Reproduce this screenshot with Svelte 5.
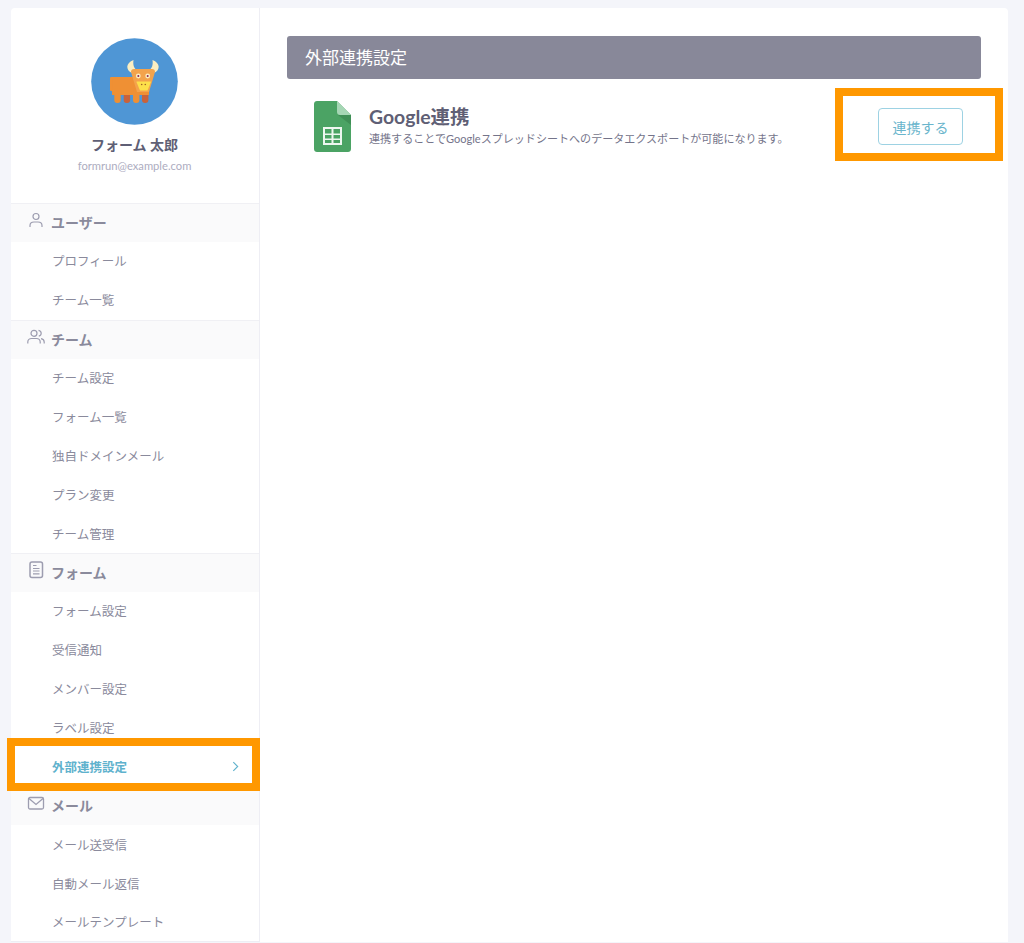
<script>
  const sections = [
    { name: 'ユーザー', icon: 'user', items: ['プロフィール', 'チーム一覧'] },
    { name: 'チーム', icon: 'team', items: ['チーム設定', 'フォーム一覧', '独自ドメインメール', 'プラン変更', 'チーム管理'] },
    { name: 'フォーム', icon: 'form', items: ['フォーム設定', '受信通知', 'メンバー設定', 'ラベル設定', '外部連携設定'] },
    { name: 'メール', icon: 'mail', items: ['メール送受信', '自動メール返信', 'メールテンプレート'] }
  ];
  const active = '外部連携設定';
</script>

<div class="page">
  <div class="card">
    <aside class="side">
      <div class="profile">
        <svg class="avatar" viewBox="91 38 87 87" width="87" height="87" aria-hidden="true">
          <circle cx="134.5" cy="81.5" r="43.3" fill="#4f96d5" />
          <rect x="123.7" y="88" width="6.4" height="15" rx="3" fill="#c9623a" />
          <rect x="142" y="88" width="6.4" height="15" rx="3" fill="#c9623a" />
          <path d="M112 77H149V95H112Z" fill="#ef9034" />
          <rect x="110" y="77" width="2.8" height="14" rx="1.2" fill="#ef9034" />
          <rect x="114.3" y="88" width="6.4" height="15" rx="3" fill="#ef9034" />
          <rect x="133" y="88" width="6.4" height="15" rx="3" fill="#ef9034" />
          <path d="M133.500 60C125.500 63 125.500 70 132 73L136.500 70C134 68 132.800 65 133.500 60Z" fill="#fbeec2" />
          <path d="M152.500 60C160.500 63 160.500 70 154 73L149.500 70C152 68 153.200 65 152.500 60Z" fill="#fbeec2" />
          <path d="M134 69H152C154 69 155 70 155 72L149 92H137L131 72C131 70 132 69 134 69Z" fill="#f3a34c" />
          <circle cx="138.300" cy="76" r="2.400" fill="#fbeec2" />
          <circle cx="147.700" cy="76" r="2.400" fill="#fbeec2" />
          <circle cx="138.300" cy="76" r="1" fill="#8c2452" />
          <circle cx="147.700" cy="76" r="1" fill="#8c2452" />
          <path d="M137 81.500H150.500C151 81.500 151 82 150.800 82.500L147.500 90.500H140L136.700 82.500C136.500 82 136.500 81.500 137 81.500Z" fill="#fde04a" />
          <circle cx="141.700" cy="84.500" r=".8" fill="#a2622a" />
          <circle cx="145.300" cy="84.500" r=".8" fill="#a2622a" />
        </svg>
        <div class="name">フォーム 太郎</div>
        <div class="email">formrun@example.com</div>
      </div>

      {#each sections as s}
        <div class="head">
          <svg class="ico" viewBox="0 0 20 20" width="20" height="20" fill="none" stroke="#9d9db0" stroke-width="1.2" aria-hidden="true">
            {#if s.icon === 'user'}
              <circle cx="10" cy="6.500" r="3" />
              <path d="M4 17V15.500C4 13.400 5.800 12 8 12H12C14.200 12 16 13.400 16 15.500V17" />
            {:else if s.icon === 'team'}
              <circle cx="8" cy="6.300" r="3" />
              <path d="M1.800 16.500V15C1.800 13 3.500 11.500 5.500 11.500H10.500C12.500 11.500 14.200 13 14.200 15V16.500" />
              <path d="M12.500 3.300C14.300 3.600 15.200 4.900 15.200 6.300C15.200 7.700 14.300 8.900 12.800 9.200" />
              <path d="M15 11.700C17 12 18.200 13.400 18.200 15V16.500" />
            {:else if s.icon === 'form'}
              <rect x="4" y="2" width="12.500" height="15.500" rx="2" stroke-width="1.500" />
              <path d="M7 5.500H10.500M7 8.500H13.500M7 11H13.500M7 13.800H13.500" />
            {:else}
              <rect x="2.500" y="3.500" width="15" height="11.500" rx="1.500" stroke-width="1.300" />
              <path d="M3 4.500L10 10.500L17 4.500" stroke-width="1.300" />
            {/if}
          </svg>
          <span>{s.name}</span>
        </div>
        {#each s.items as item}
          <div class="item" class:active={item === active}>
            <span>{item}</span>
            {#if item === active}
              <svg viewBox="0 0 8 12" width="7" height="11" fill="none" stroke="#5fb2cd" stroke-width="1.300" aria-hidden="true">
                <path d="M1.500 1L6.500 6L1.500 11" />
              </svg>
            {/if}
          </div>
        {/each}
      {/each}
    </aside>

    <main class="main">
      <h1 class="title">外部連携設定</h1>
      <div class="row">
        <svg class="sheet" viewBox="0 0 37 51" width="37" height="51" aria-hidden="true">
          <path d="M3 0H23L37 14V48C37 49.700 35.700 51 34 51H3C1.300 51 0 49.700 0 48V3C0 1.300 1.300 0 3 0Z" fill="#4ba364" />
          <path d="M24 14L37 24V14Z" fill="#3f8f56" />
          <path d="M23 0L37 14H26C24.300 14 23 12.700 23 11Z" fill="#a5d6b4" />
          <path d="M9 26H28V44H9ZM11 28V32.500H17.500V28ZM19.500 28V32.500H26V28ZM11 34V37.500H17.500V34ZM19.500 34V37.500H26V34ZM11 39V42H17.500V39ZM19.500 39V42H26V39Z" fill="#eef7f0" fill-rule="evenodd" />
        </svg>
        <div class="info">
          <div class="gtitle">Google連携</div>
          <div class="desc">連携することでGoogleスプレッドシートへのデータエクスポートが可能になります。</div>
        </div>
        <button class="btn" type="button">連携する</button>
      </div>
    </main>
  </div>

  <div class="mark mark-side"></div>
  <div class="mark mark-btn"></div>
</div>

<style>
  :global(body) {
    margin: 0;
    background: #f4f5fa;
  }
  .page {
    position: relative;
    height: 943px;
    overflow: hidden;
    padding: 8px 16px 0 11px;
    box-sizing: border-box;
    font-family: "Lato", "Noto Sans CJK JP", sans-serif;
  }
  .card {
    display: flex;
    background: #fff;
    border-radius: 4px 4px 0 0;
    height: 934px;
  }
  .side {
    width: 248px;
    flex: none;
    border-right: 1px solid #eeeef4;
    border-bottom: 1px solid #eeeef4;
  }
  .profile {
    height: 195px;
    padding: 30px 1px 0 0;
    box-sizing: border-box;
    text-align: center;
  }
  .avatar {
    display: block;
    margin: 0 auto;
  }
  .name {
    margin-top: 10px;
    font-size: 14px;
    line-height: 20px;
    font-weight: 700;
    color: #5f5f75;
  }
  .email {
    margin-top: 2px;
    font-size: 11.200px;
    line-height: 17px;
    color: #adadbf;
  }
  .head {
    display: flex;
    align-items: center;
    height: 38.900px;
    box-sizing: border-box;
    padding: 0 0 2px 15px;
    background: #fafafb;
    border-top: 1px solid #f0f0f4;
    font-size: 14px;
    font-weight: 700;
    color: #8a8a9c;
  }
  .ico {
    margin-right: 5px;
    margin-top: -3px;
  }
  .item {
    display: flex;
    align-items: center;
    justify-content: space-between;
    height: 38.900px;
    padding: 0 20px 1px 41px;
    box-sizing: border-box;
    font-size: 12.500px;
    color: #8a8a9c;
  }
  .item.active {
    color: #5fb2cd;
    font-weight: 700;
  }
  .main {
    flex: 1;
    padding: 28px 27px 0 27px;
    min-width: 0;
  }
  .title {
    margin: 0;
    height: 43px;
    line-height: 43px;
    padding-left: 18px;
    background: #888899;
    border-radius: 3px;
    font-size: 17px;
    font-weight: 400;
    color: #fff;
  }
  .row {
    display: flex;
    align-items: flex-start;
    padding: 22px 18px 0 27px;
  }
  .sheet {
    flex: none;
  }
  .info {
    flex: 1;
    margin-left: 18px;
    padding-top: 4px;
  }
  .gtitle {
    font-size: 19.400px;
    line-height: 24px;
    font-weight: 700;
    color: #5f5f75;
  }
  .desc {
    margin-top: 2px;
    font-size: 11.050px;
    line-height: 16px;
    color: #74748a;
  }
  .btn {
    flex: none;
    width: 85px;
    height: 37px;
    margin-top: 7px;
    padding: 0;
    background: #fff;
    border: 1px solid #9dd2e3;
    border-radius: 4px;
    font: inherit;
    font-size: 14px;
    color: #6ab5cc;
  }
  .mark {
    position: absolute;
    border: 8px solid #ff9800;
    box-sizing: border-box;
  }
  .mark-side {
    left: 7px;
    top: 738px;
    width: 253px;
    height: 53px;
  }
  .mark-btn {
    left: 835px;
    top: 88px;
    width: 168px;
    height: 73px;
  }
</style>
